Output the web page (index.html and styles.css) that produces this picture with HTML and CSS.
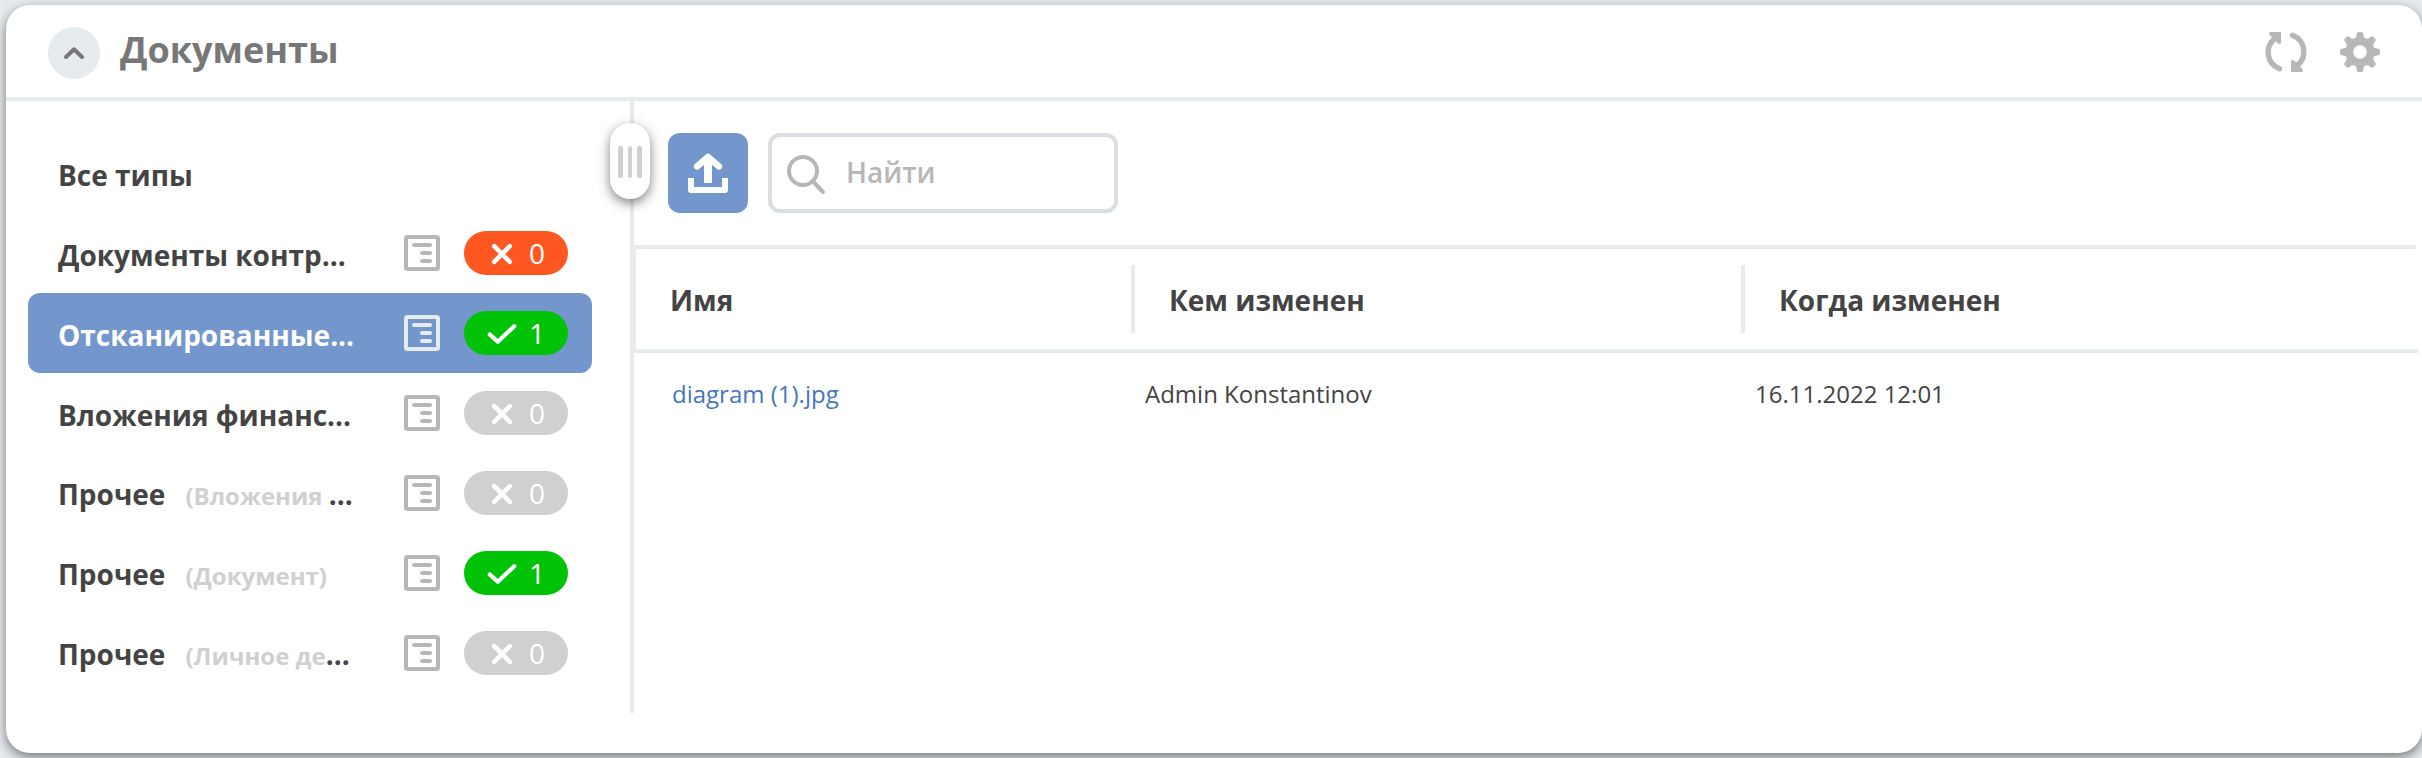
FILE: index.html
```html
<!DOCTYPE html>
<html lang="ru">
<head>
<meta charset="utf-8">
<title>Документы</title>
<link rel="stylesheet" href="styles.css">
</head>
<body>
<svg class="defs" aria-hidden="true">
  <symbol id="form" viewBox="0 0 36 36"><rect x="2" y="2" width="32" height="32" rx="1.500" fill="none" stroke="currentColor" stroke-width="4"/><path d="M10 10H26M18 18H26M18 26H26" stroke="currentColor" stroke-width="4" stroke-linecap="round"/></symbol>
  <symbol id="cross" viewBox="0 0 30 22"><path d="M7.200 3.200L22.800 18.800M22.800 3.200L7.200 18.800" fill="none" stroke="currentColor" stroke-width="4.500" stroke-linecap="round"/></symbol>
  <symbol id="check" viewBox="0 0 30 22"><path d="M2.800 11.500L10.800 18.800L27.200 3.200" fill="none" stroke="currentColor" stroke-width="4.200" stroke-linecap="round" stroke-linejoin="round"/></symbol>
</svg>
<section class="card">
  <header class="head">
    <button class="toggle"><svg width="22" height="14" viewBox="0 0 22 14"><path d="M3 11L11 3.300L19 11" fill="none" stroke="currentColor" stroke-width="4" stroke-linecap="round" stroke-linejoin="round"/></svg></button>
    <h1 class="title">Документы</h1>
    <div class="tools">
      <svg width="40" height="40" viewBox="0 0 40 40"><g fill="none" stroke="currentColor" stroke-width="5.400" stroke-linecap="round"><path d="M13.500 36.800C-0.500 31 -1 14 9 6.500"/><path d="M26.500 3.200C40.500 9 41 26 31 33.500"/></g><path d="M4 0H15V11Q13.500 13 11.500 11L3.500 3Q2.500 1 4 0ZM36 40H25V29Q26.500 27 28.500 29L36.500 37Q37.500 39 36 40Z" fill="currentColor"/></svg>
      <svg width="40" height="40" viewBox="0 0 40 40"><path fill="currentColor" fill-rule="evenodd" d="M17 .5Q20-.5 23 .5L24 5.500Q26 7.500 28.500 6.500L32 4Q34.500 5.500 36 8L33.500 11.500Q32.500 14 34.500 16L39.500 17Q40.500 20 39.500 23L34.500 24Q32.500 26 33.500 28.500L36 32Q34.500 34.500 32 36L28.500 33.500Q26 32.500 24 34.500L23 39.500Q20 40.500 17 39.500L16 34.500Q14 32.500 11.500 33.500L8 36Q5.500 34.500 4 32L6.500 28.500Q7.500 26 5.500 24L.5 23Q-.5 20 .5 17L5.500 16Q7.500 14 6.500 11.500L4 8Q5.500 5.500 8 4L11.500 6.500Q14 7.500 16 5.500ZM20 13.200A6.800 6.800 0 1 0 20 26.800A6.800 6.800 0 1 0 20 13.200Z"/></svg>
    </div>
  </header>
  <div class="body">
    <nav class="types">
      <div class="type"><span class="name">Все типы</span></div>
      <div class="type"><span class="name">Документы контр...</span><svg class="form"><use href="#form"/></svg><span class="badge red"><svg class="mark"><use href="#cross"/></svg>0</span></div>
      <div class="type active"><span class="name">Отсканированные...</span><svg class="form"><use href="#form"/></svg><span class="badge green"><svg class="mark"><use href="#check"/></svg>1</span></div>
      <div class="type"><span class="name">Вложения финанс...</span><svg class="form"><use href="#form"/></svg><span class="badge"><svg class="mark"><use href="#cross"/></svg>0</span></div>
      <div class="type"><span class="name">Прочее<span class="sub">(Вложения </span>...</span><svg class="form"><use href="#form"/></svg><span class="badge"><svg class="mark"><use href="#cross"/></svg>0</span></div>
      <div class="type"><span class="name">Прочее<span class="sub">(Документ)</span></span><svg class="form"><use href="#form"/></svg><span class="badge green"><svg class="mark"><use href="#check"/></svg>1</span></div>
      <div class="type"><span class="name">Прочее<span class="sub">(Личное де</span>...</span><svg class="form"><use href="#form"/></svg><span class="badge"><svg class="mark"><use href="#cross"/></svg>0</span></div>
    </nav>
    <div class="divider"><div class="handle"><i></i><i></i><i></i></div></div>
    <main class="main">
      <div class="bar">
        <button class="upload"><svg width="40" height="40" viewBox="0 0 40 40"><path d="M3 25V37H37V25" fill="none" stroke="currentColor" stroke-width="6" stroke-linejoin="round"/><path d="M20 30V6" stroke="currentColor" stroke-width="8"/><path d="M9 13.500L20 4L31 13.500" fill="none" stroke="currentColor" stroke-width="6.500" stroke-linejoin="round" stroke-linecap="round"/></svg></button>
        <label class="search"><svg width="40" height="40" viewBox="0 0 40 40"><g fill="none" stroke="currentColor" stroke-width="4"><circle cx="16" cy="18" r="14"/><path d="M26 28.500L36 39" stroke-linecap="round"/></g></svg><span>Найти</span></label>
      </div>
      <div class="thead"><div class="th c1">Имя</div><div class="th c2">Кем изменен</div><div class="th c3">Когда изменен</div></div>
      <div class="row"><div class="td d1"><a class="link">diagram (1).jpg</a></div><div class="td d2">Admin Konstantinov</div><div class="td">16.11.2022 12:01</div></div>
    </main>
  </div>
</section>
</body>
</html>
```
FILE: styles.css
```css
* { box-sizing: border-box; }
body { margin: 0; height: 758px; padding: 5px 0 5px 6px; overflow: hidden; background: #e6ecee; font-family: "Open Sans", "Noto Sans", sans-serif; color: #444; }
button { border: 0; padding: 0; font: inherit; }
svg { overflow: visible; }
.defs { display: none; }
.card { height: 748px; background: #fff; border-radius: 24px; box-shadow: 0 4px 12px rgba(0, 0, 0, .5); }
.head { display: flex; align-items: center; height: 96px; padding: 0 42px 0 42px; border-bottom: 4px solid #e6ecee; }
.toggle { display: grid; place-items: center; width: 52px; height: 52px; margin-top: 4px; border-radius: 50%; background: #e6ecee; color: #777; }
.title { margin: -2px 0 0 20px; font-size: 36px; font-weight: 700; line-height: 48px; color: #777; }
.tools { display: flex; gap: 34px; margin: 2px 0 0 auto; color: #b7b7b7; }
.body { display: flex; height: 612px; }
.types { width: 624px; padding: 32px 38px 0 22px; }
.type { display: flex; align-items: center; height: 80px; padding: 0 24px 0 30px; border-radius: 12px; font-size: 28px; font-weight: 700; }
.name { width: 300px; white-space: nowrap; line-height: 40px; margin-top: 4px; }
.sub { margin-left: 20px; font-size: 24px; color: #d0d0d0; }
.form { width: 36px; height: 36px; margin-left: 46px; color: #b7b7b7; }
.badge { display: flex; align-items: center; width: 104px; height: 44px; margin-left: 24px; padding-left: 23px; border-radius: 22px; background: #d0d0d0; color: #fff; font-weight: 400; line-height: 42px; }
.mark { width: 30px; height: 22px; margin: 2px 12px 0 0; }
.red { background: #ff5722; }
.green { background: #00c307; }
.active { background: #7396cd; color: #fff; }
.active .form { color: #e6ecee; }
.divider { position: relative; width: 4px; background: #e6ecee; }
.handle { position: absolute; left: -20px; top: 22px; display: flex; justify-content: center; align-items: center; gap: 5px; width: 40px; height: 76px; border-radius: 20px; background: #fff; box-shadow: 0 4px 12px rgba(0, 0, 0, .5); }
.handle i { width: 4.5px; height: 32px; margin-top: 2px; border-radius: 2px; background: #d0d0d0; }
.main { flex: 1; }
.bar { display: flex; gap: 20px; height: 148px; margin-right: 6px; padding: 32px 34px; border-bottom: 4px solid #e6ecee; }
.upload { display: grid; place-items: center; width: 80px; height: 80px; border-radius: 12px; background: #7396cd; color: #fff; }
.search { display: flex; align-items: center; gap: 19px; width: 350px; height: 80px; padding-left: 15px; border: 4px solid #d8dee2; border-radius: 12px; color: #b7b7b7; font-size: 28px; font-weight: 600; }
.search span { margin-top: -2px; }
.thead { display: flex; align-items: center; height: 104px; margin-right: 4px; border-left: 2px solid #e6ecee; border-bottom: 4px solid #e6ecee; font-size: 28px; font-weight: 700; }
.th { height: 68px; padding-left: 34px; line-height: 70px; }
.c1 { width: 499px; border-right: 4px solid #e6ecee; }
.c2 { width: 610px; border-right: 4px solid #e6ecee; }
.row { display: flex; height: 82px; padding-left: 38px; line-height: 82px; font-size: 24px; }
.d1 { width: 473px; }
.d2 { width: 610px; }
.link { color: #4478bd; }
```
